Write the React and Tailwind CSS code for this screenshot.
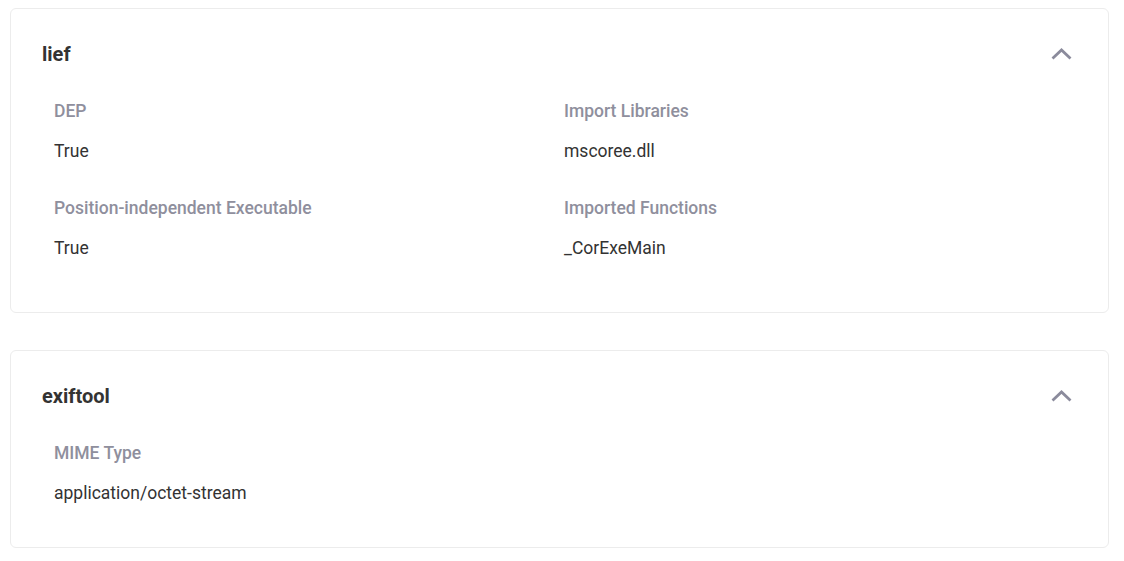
const SECTIONS = [
  {
    name: "lief",
    pb: "pb-[52px]",
    fields: [
      { label: "DEP", value: "True" },
      { label: "Import Libraries", value: "mscoree.dll" },
      { label: "Position-independent Executable", value: "True" },
      { label: "Imported Functions", value: "_CorExeMain" },
    ],
  },
  {
    name: "exiftool",
    pb: "pb-[42px]",
    fields: [{ label: "MIME Type", value: "application/octet-stream" }],
  },
];

function Chevron() {
  return (
    <svg width="21" height="12" viewBox="0 0 21 12" fill="none">
      <path
        d="M1.5 10.5L10.5 2l9 8.5"
        stroke="#8b8b9c"
        strokeWidth="2.8"
      />
    </svg>
  );
}

function Section({ section }) {
  return (
    <div className={`rounded-md border border-[#ececec] bg-white pl-[31px] pr-[36px] pt-[31px] ${section.pb}`}>
      <div className="flex items-center justify-between h-7">
        <h2 className="text-[20px] leading-7 font-bold text-[#333]">{section.name}</h2>
        <Chevron />
      </div>
      <div className="mt-[31px] pl-3 grid grid-cols-[510px_1fr] gap-y-[33px]">
        {section.fields.map((f) => (
          <div key={f.label}>
            <div className="text-[17.5px] leading-6 font-medium text-[#8f8f9d]">{f.label}</div>
            <div className="mt-4 text-[17.5px] leading-6 text-[#333]">{f.value}</div>
          </div>
        ))}
      </div>
    </div>
  );
}

export default function App() {
  return (
    <div
      className="min-h-screen bg-white pt-2 pl-[10px] w-[1109px] flex flex-col gap-[37px]"
      style={{ fontFamily: "Roboto, 'Noto Sans', sans-serif" }}
    >
      {SECTIONS.map((s) => (
        <Section key={s.name} section={s} />
      ))}
    </div>
  );
}
